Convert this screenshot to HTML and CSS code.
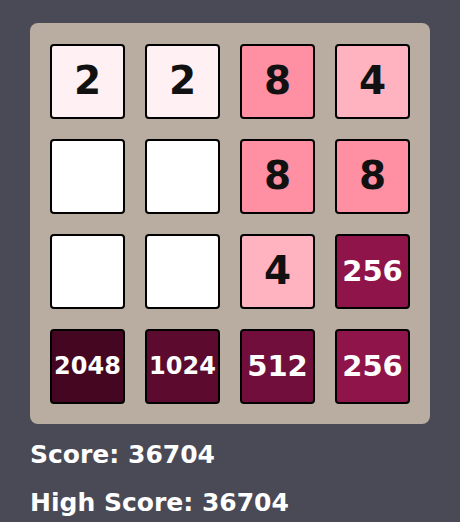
FILE: index.html
```html
<!DOCTYPE html>
<html lang="en">
<head>
  <meta charset="UTF-8">
  <meta name="viewport" content="width=device-width, initial-scale=1.0">
  <title>2048</title>
  <link rel="stylesheet" href="styles.css">
</head>
<body>
  <div class="game">
    <div class="board" id="board">
      <div class="tile t2">2</div>
      <div class="tile t2">2</div>
      <div class="tile t8">8</div>
      <div class="tile t4">4</div>

      <div class="tile"></div>
      <div class="tile"></div>
      <div class="tile t8">8</div>
      <div class="tile t8">8</div>

      <div class="tile"></div>
      <div class="tile"></div>
      <div class="tile t4">4</div>
      <div class="tile t256">256</div>

      <div class="tile t2048">2048</div>
      <div class="tile t1024">1024</div>
      <div class="tile t512">512</div>
      <div class="tile t256">256</div>
    </div>
    <div class="score">Score: <span id="score">36704</span></div>
    <div class="score">High Score: <span id="best">36704</span></div>
  </div>
</body>
</html>
```

FILE: styles.css
```css
body {
  margin: 0;
  background: #4a4a57;
  color: #fff;
  font-family: 'DejaVu Sans', Verdana, sans-serif;
  font-weight: bold;
}
.game {
  padding: 23px 30px 0;
}
.board {
  width: 400px;
  box-sizing: border-box;
  padding: 21px 20px 20px;
  display: grid;
  grid-template-columns: repeat(4, 75px);
  grid-auto-rows: 75px;
  gap: 20px;
  background: #b9ada1;
  border-radius: 8px;
}
.tile {
  box-sizing: border-box;
  border: 2px solid #000;
  border-radius: 4px;
  background: #fff;
  color: #111;
  display: flex;
  align-items: center;
  justify-content: center;
  font-size: 39px;
  padding-bottom: 2px;
}
.t2 { background: #fff0f3; }
.t4 { background: #ffb3c1; }
.t8 { background: #ff8fa3; }
.t256 { background: #8f1449; color: #fff; font-size: 29px; }
.t512 { background: #720e3c; color: #fff; font-size: 29px; }
.t1024 { background: #5c0a2e; color: #fff; font-size: 24px; }
.t2048 { background: #440620; color: #fff; font-size: 24px; }
.score {
  font-size: 25px;
  line-height: 30px;
  margin-top: 16px;
}
.score + .score {
  margin-top: 18px;
}
```
